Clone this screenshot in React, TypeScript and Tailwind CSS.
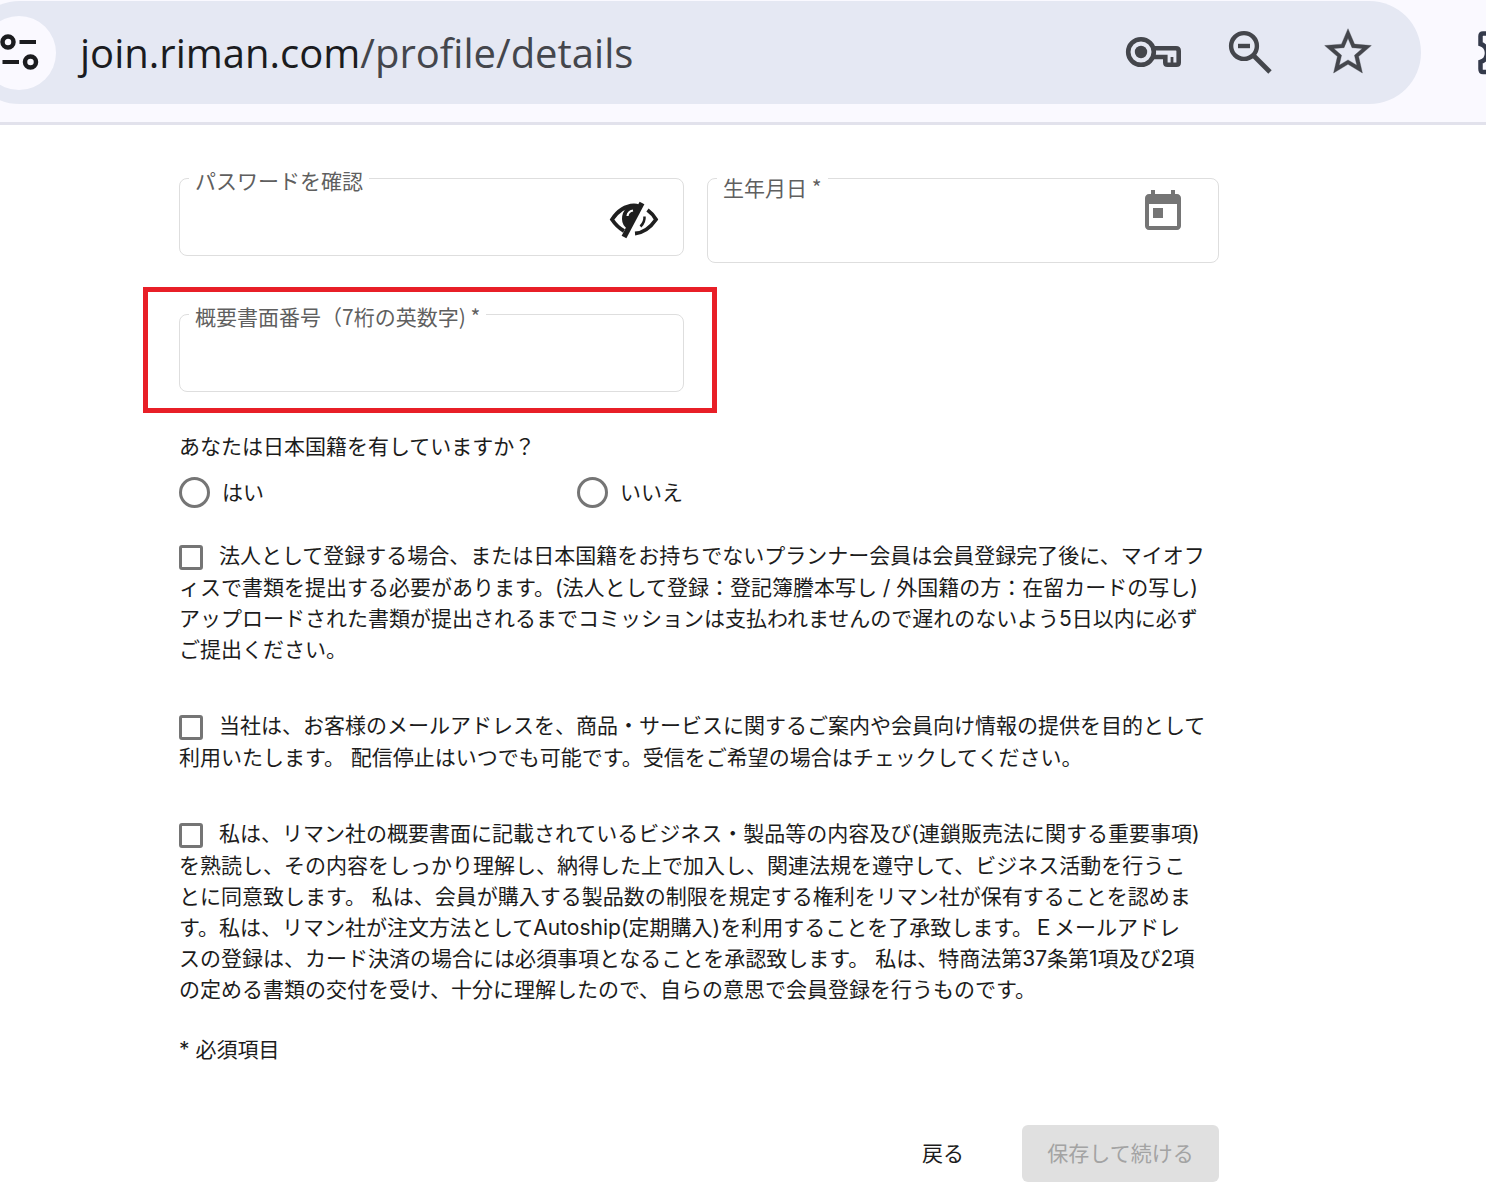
import { useState } from 'react';
import type { ReactNode } from 'react';

const TuneIcon = () => (
  <svg width="38" height="36" viewBox="0 0 38 36" className="overflow-visible" fill="none" stroke="#1b1c1f" strokeWidth="4">
    <circle cx="8" cy="7" r="5.5" strokeWidth="4.5" />
    <path d="M19.5 7H36M2.5 27H19" />
    <circle cx="30.5" cy="27" r="5.5" strokeWidth="4.5" />
  </svg>
);

const KeyIcon = () => (
  <svg width="56" height="32" viewBox="0 0 56 32" className="overflow-visible" fill="none" stroke="#44464c" strokeWidth="4.6">
    <circle cx="17" cy="16" r="12.8" />
    <circle cx="17" cy="16" r="6.2" fill="#44464c" stroke="none" />
    <path d="M29 12.3H52Q54.7 12.3 54.7 15V26.5Q54.7 28.7 52.5 28.7H43.5Q41.3 28.7 41.3 26.5V21H29" />
    <path d="M48 21V28" strokeWidth="2.8" />
  </svg>
);

const ZoomOutIcon = () => (
  <svg width="44" height="44" viewBox="0 0 44 44" fill="none" stroke="#44464c" strokeWidth="4.4">
    <circle cx="16" cy="16" r="12.9" />
    <path d="M10 16H22" />
    <path d="M25.5 25.5L42 42" strokeWidth="4.8" />
  </svg>
);

const StarIcon = () => (
  <svg width="56" height="56" viewBox="0 0 24 24" fill="#44464c" stroke="#44464c" strokeWidth="0.15">
    <path d="M22 9.24l-7.19-.62L12 2 9.19 8.63 2 9.24l5.46 4.73L5.82 21 12 17.27 18.18 21l-1.63-7.03L22 9.24zM12 15.4l-3.76 2.27 1-4.28-3.32-2.88 4.38-.38L12 6.1l1.71 4.04 4.38.38-3.32 2.88 1 4.28L12 15.4z" />
  </svg>
);

const PuzzleIcon = () => (
  <svg width="44" height="44" viewBox="0 0 44 44" fill="none" stroke="#343a4b" strokeWidth="4.5">
    <path d="M12 2.5H5Q2.5 2.5 2.5 5V13Q9 15 9 22T2.5 31V38Q2.5 41 5 41H36Q38 41 38 38V5Q38 2.5 36 2.5Z" />
  </svg>
);

const EyeOffIcon = () => (
  <svg width="50" height="38" viewBox="0 0 50 38" fill="none" stroke="#1f1f1f" strokeWidth="3.8">
    <path d="M30 5.5Q27.5 4.5 25 4.5Q12 5 3 18.5Q8 26 15 30" />
    <path d="M38.5 9Q44 13 47 18.5Q38 31.5 26 32.5" />
    <path d="M32 5Q25 2.5 18 6.5Q13 11 13 18Q13 24 18.5 28Z" fill="#1f1f1f" stroke="none" />
    <path d="M18.5 15Q19 10.5 24 9.5" stroke="#fff" strokeWidth="2.2" />
    <path d="M35.5 15.5Q36 21 31.5 25.5" strokeWidth="2.5" />
    <path d="M33 2L15 36" strokeWidth="5.4" />
  </svg>
);

const CalendarIcon = () => (
  <svg width="48" height="48" viewBox="0 0 24 24" fill="#757575">
    <path d="M19 3h-1V1h-2v2H8V1H6v2H5c-1.11 0-1.99.9-1.99 2L3 19c0 1.1.89 2 2 2h14c1.1 0 2-.9 2-2V5c0-1.1-.9-2-2-2zm0 16H5V8h14v11zM7 10h5v5H7z" />
  </svg>
);

interface FieldProps {
  id: string;
  label: string;
  type?: string;
  tall?: boolean;
  children?: ReactNode;
}

function Field({ id, label, type = 'text', tall = false, children }: FieldProps) {
  return (
    <div className={`relative flex rounded-lg border border-[#dedede] ${tall ? 'h-[85px]' : 'h-[78px]'}`}>
      <label
        htmlFor={id}
        className={`absolute left-[9px] bg-white px-[6px] font-['Noto_Sans_CJK_JP',sans-serif] text-[21px] leading-6 whitespace-nowrap text-[#5f5f5f] ${tall ? '-top-1' : '-top-[11px]'}`}
      >
        {label}
      </label>
      <input id={id} type={type} className="min-w-0 flex-1 rounded-lg bg-transparent px-4 pt-4 text-[21px] outline-none" />
      {children}
    </div>
  );
}

function Consent({ id, children }: { id: string; children: ReactNode }) {
  return (
    <p>
      <input
        id={id}
        type="checkbox"
        className="mr-4 mb-[2px] inline-block h-[25px] w-6 appearance-none rounded-[3px] border-[3px] border-[#757575] align-[-9px] checked:bg-[#757575]"
      />
      <label htmlFor={id}>{children}</label>
    </p>
  );
}

export default function App() {
  const [citizen, setCitizen] = useState('');
  const [showPassword, setShowPassword] = useState(false);

  return (
    <div className="overflow-hidden bg-white font-['Inter','Noto_Sans_CJK_JP',sans-serif] text-[21px] leading-[31px] text-[#1c1c1c]">
      <header className="flex h-[125px] items-start border-b-[3px] border-[#e2e2ec] bg-[#faf9ff] pt-px">
        <div className="-ml-8 flex h-[103px] flex-1 items-center rounded-full bg-[#e5e8f3] pr-[45px] pl-[14px]">
          <button type="button" aria-label="サイト情報" className="flex size-[74px] shrink-0 items-center justify-center rounded-full bg-[#faf9ff]">
            <TuneIcon />
          </button>
          <div className="ml-6 flex-1 font-['Open_Sans',sans-serif] text-[40px] leading-[56px] whitespace-nowrap text-[#1b1c1f]">
            join.riman.com<span className="text-[#44464c]">/profile/details</span>
          </div>
          <div className="flex items-center pb-[2px]">
            <button type="button" aria-label="パスワード"><KeyIcon /></button>
            <button type="button" aria-label="縮小" className="ml-12"><ZoomOutIcon /></button>
            <button type="button" aria-label="ブックマーク" className="ml-12"><StarIcon /></button>
          </div>
        </div>
        <div className="w-[65px] shrink-0 pt-[30px] pl-[57px]">
          <PuzzleIcon />
        </div>
      </header>

      <main className="pt-[53px] pr-[267px] pl-[179px]">
        <form onSubmit={(e) => e.preventDefault()}>
          <div className="grid grid-cols-[505fr_512fr] items-start gap-x-[23px] gap-y-[51px]">
            <Field id="confirm" label="パスワードを確認" type={showPassword ? 'text' : 'password'}>
              <button type="button" aria-label="パスワードを表示" onClick={() => setShowPassword(!showPassword)} className="mr-6 pt-[6px]">
                <EyeOffIcon />
              </button>
            </Field>
            <Field id="birthday" label="生年月日 *" tall>
              <button type="button" aria-label="カレンダー" className="mr-[31px] self-start pt-[9px]">
                <CalendarIcon />
              </button>
            </Field>
            <div className="relative">
              <Field id="document" label="概要書面番号（7桁の英数字) *" />
              <div className="pointer-events-none absolute -top-[27px] -right-[33px] -bottom-[21px] -left-9 border-[5px] border-[#e81f27]" />
            </div>
          </div>

          <fieldset className="mt-[39px]">
            <legend>あなたは日本国籍を有していますか？</legend>
            <div className="mt-[15px] flex">
              <label className="flex w-[398px] items-center gap-3">
                <input
                  type="radio"
                  name="citizen"
                  checked={citizen === 'yes'}
                  onChange={() => setCitizen('yes')}
                  className="size-[31px] appearance-none rounded-full border-[3px] border-[#757575] checked:border-8"
                />
                はい
              </label>
              <label className="flex items-center gap-3">
                <input
                  type="radio"
                  name="citizen"
                  checked={citizen === 'no'}
                  onChange={() => setCitizen('no')}
                  className="size-[31px] appearance-none rounded-full border-[3px] border-[#757575] checked:border-8"
                />
                いいえ
              </label>
            </div>
          </fieldset>

          <div className="mt-8 flex flex-col gap-[45px] whitespace-nowrap">
            <Consent id="documents">
              法人として登録する場合、または日本国籍をお持ちでないプランナー会員は会員登録完了後に、マイオフ
              <br />
              ィスで書類を提出する必要があります。(法人として登録：登記簿謄本写し / 外国籍の方：在留カードの写し)
              <br />
              アップロードされた書類が提出されるまでコミッションは支払われませんので遅れのないよう5日以内に必ず
              <br />
              ご提出ください。
            </Consent>
            <Consent id="mail">
              当社は、お客様のメールアドレスを、商品・サービスに関するご案内や会員向け情報の提供を目的として
              <br />
              利用いたします。 配信停止はいつでも可能です。受信をご希望の場合はチェックしてください。
            </Consent>
            <Consent id="agreement">
              私は、リマン社の概要書面に記載されているビジネス・製品等の内容及び(連鎖販売法に関する重要事項)
              <br />
              を熟読し、その内容をしっかり理解し、納得した上で加入し、関連法規を遵守して、ビジネス活動を行うこ
              <br />
              とに同意致します。 私は、会員が購入する製品数の制限を規定する権利をリマン社が保有することを認めま
              <br />
              す。私は、リマン社が注文方法としてAutoship(定期購入)を利用することを了承致します。Ｅメールアドレ
              <br />
              スの登録は、カード決済の場合には必須事項となることを承認致します。 私は、特商法第37条第1項及び2項
              <br />
              の定める書類の交付を受け、十分に理解したので、自らの意思で会員登録を行うものです。
            </Consent>
          </div>

          <p className="mt-[29px]">* 必須項目</p>

          <div className="mt-[60px] mb-[6px] flex justify-end gap-[34px]">
            <button type="button" className="h-[57px] px-6">戻る</button>
            <button type="submit" disabled className="h-[57px] w-[197px] rounded-md bg-[#e0e0e0] text-[#a3a3a3]">
              保存して続ける
            </button>
          </div>
        </form>
      </main>
    </div>
  );
}
